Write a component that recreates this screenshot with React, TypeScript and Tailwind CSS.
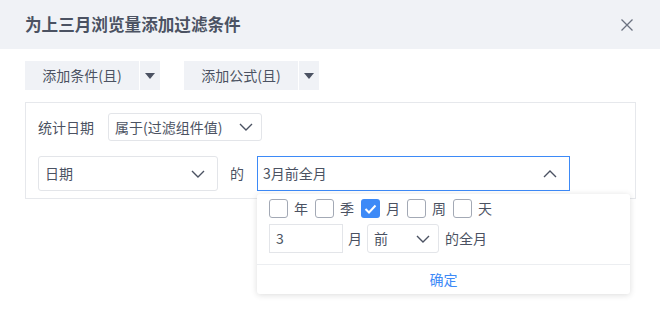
const FONT = { fontFamily: '"Noto Sans CJK SC", "Noto Sans", sans-serif' }

function Chevron({ up = false }: { up?: boolean }) {
  return (
    <svg width="14" height="8" viewBox="0 0 14 8" className="text-[#4b5262]">
      <path d={up ? 'M1 7 L7 1 L13 7' : 'M1 1 L7 7 L13 1'} fill="none" stroke="currentColor" strokeWidth="1.4" />
    </svg>
  )
}

function Caret() {
  return (
    <svg width="10" height="6" viewBox="0 0 10 6">
      <path d="M0 0 H10 L5 6 Z" fill="#4b5262" />
    </svg>
  )
}

function SplitButton({ label }: { label: string }) {
  return (
    <div className="flex h-[29px] gap-px">
      <div className="flex w-[114px] items-center justify-center bg-[#f0f2f6] text-[14px] text-[#4b5262]">{label}</div>
      <div className="flex w-[20px] items-center justify-center bg-[#f0f2f6]"><Caret /></div>
    </div>
  )
}

function Check({ label, on = false }: { label: string; on?: boolean }) {
  return (
    <div className="flex items-center gap-[6px]">
      {on ? (
        <span className="flex h-[19px] w-[19px] items-center justify-center rounded-[3px] bg-[#3d8af7]">
          <svg width="13" height="10" viewBox="0 0 13 10">
            <path d="M1.5 5 L5 8.5 L11.5 1.5" fill="none" stroke="white" strokeWidth="2" />
          </svg>
        </span>
      ) : (
        <span className="h-[19px] w-[19px] rounded-[3px] border border-[#a3a9b5] bg-white" />
      )}
      <span className="w-[14px] text-[14px] text-[#4b5262]">{label}</span>
    </div>
  )
}

export default function App() {
  return (
    <div style={FONT} className="relative h-[314px] w-[662px] overflow-hidden bg-white text-[#4b5262]">
      <div className="mr-[2px] flex h-[49px] items-center justify-between bg-[#f0f2f6] pl-[25px] pr-[27px]">
        <span className="text-[16.6px] font-bold text-[#4b5262]">为上三月浏览量添加过滤条件</span>
        <svg width="12" height="12" viewBox="0 0 12 12" className="text-[#6b7280]">
          <path d="M0.5 0.5 L11.5 11.5 M11.5 0.5 L0.5 11.5" stroke="currentColor" strokeWidth="1.3" />
        </svg>
      </div>

      <div className="mt-[12px] flex gap-[24px] pl-[25px]">
        <SplitButton label="添加条件(且)" />
        <SplitButton label="添加公式(且)" />
      </div>

      <div className="ml-[25px] mt-[12px] h-[97px] w-[611px] border border-[#e6e8ec] px-[12px] pt-[10px]">
        <div className="flex items-center">
          <span className="w-[70px] text-[14px]">统计日期</span>
          <div className="flex h-[28px] w-[154px] items-center justify-between rounded-[3px] border border-[#e3e5e9] pl-[6px] pr-[8px] text-[14px]">
            <span>属于(过滤组件值)</span>
            <Chevron />
          </div>
        </div>
        <div className="mt-[15px] flex items-center">
          <div className="flex h-[35px] w-[180px] items-center justify-between rounded-[3px] border border-[#e3e5e9] pl-[6px] pr-[12px] text-[14px]">
            <span>日期</span>
            <Chevron />
          </div>
          <span className="ml-[12px] w-[27px] text-[14px]">的</span>
          <div className="relative flex h-[35px] w-[313px] items-center justify-between border border-[#3d8af7] pl-[5px] pr-[12px] text-[14px]">
            <span>3月前全月</span>
            <Chevron up />
            <div className="absolute left-[-1px] top-[37px] z-10 w-[373px] rounded-[3px] bg-white shadow-[0_1px_6px_rgba(0,0,0,0.14)]">
              <div className="flex gap-[7px] pl-[12px] pt-[4px]">
                <Check label="年" />
                <Check label="季" />
                <Check label="月" on />
                <Check label="周" />
                <Check label="天" />
              </div>
              <div className="mt-[5px] flex items-center pl-[12px]">
                <div className="flex h-[29px] w-[74px] items-center border border-[#e3e5e9] pl-[6px] text-[14px]">3</div>
                <span className="ml-[5px] w-[19px] text-[14px]">月</span>
                <div className="flex h-[29px] w-[72px] items-center justify-between rounded-[3px] border border-[#e3e5e9] pl-[6px] pr-[8px] text-[14px]">
                  <span>前</span>
                  <Chevron />
                </div>
                <span className="ml-[6px] text-[14px]">的全月</span>
              </div>
              <div className="mt-[11px] flex h-[30px] items-center justify-center border-t border-[#eceef1] text-[14px] text-[#3d8af7]">确定</div>
            </div>
          </div>
        </div>
      </div>
    </div>
  )
}
